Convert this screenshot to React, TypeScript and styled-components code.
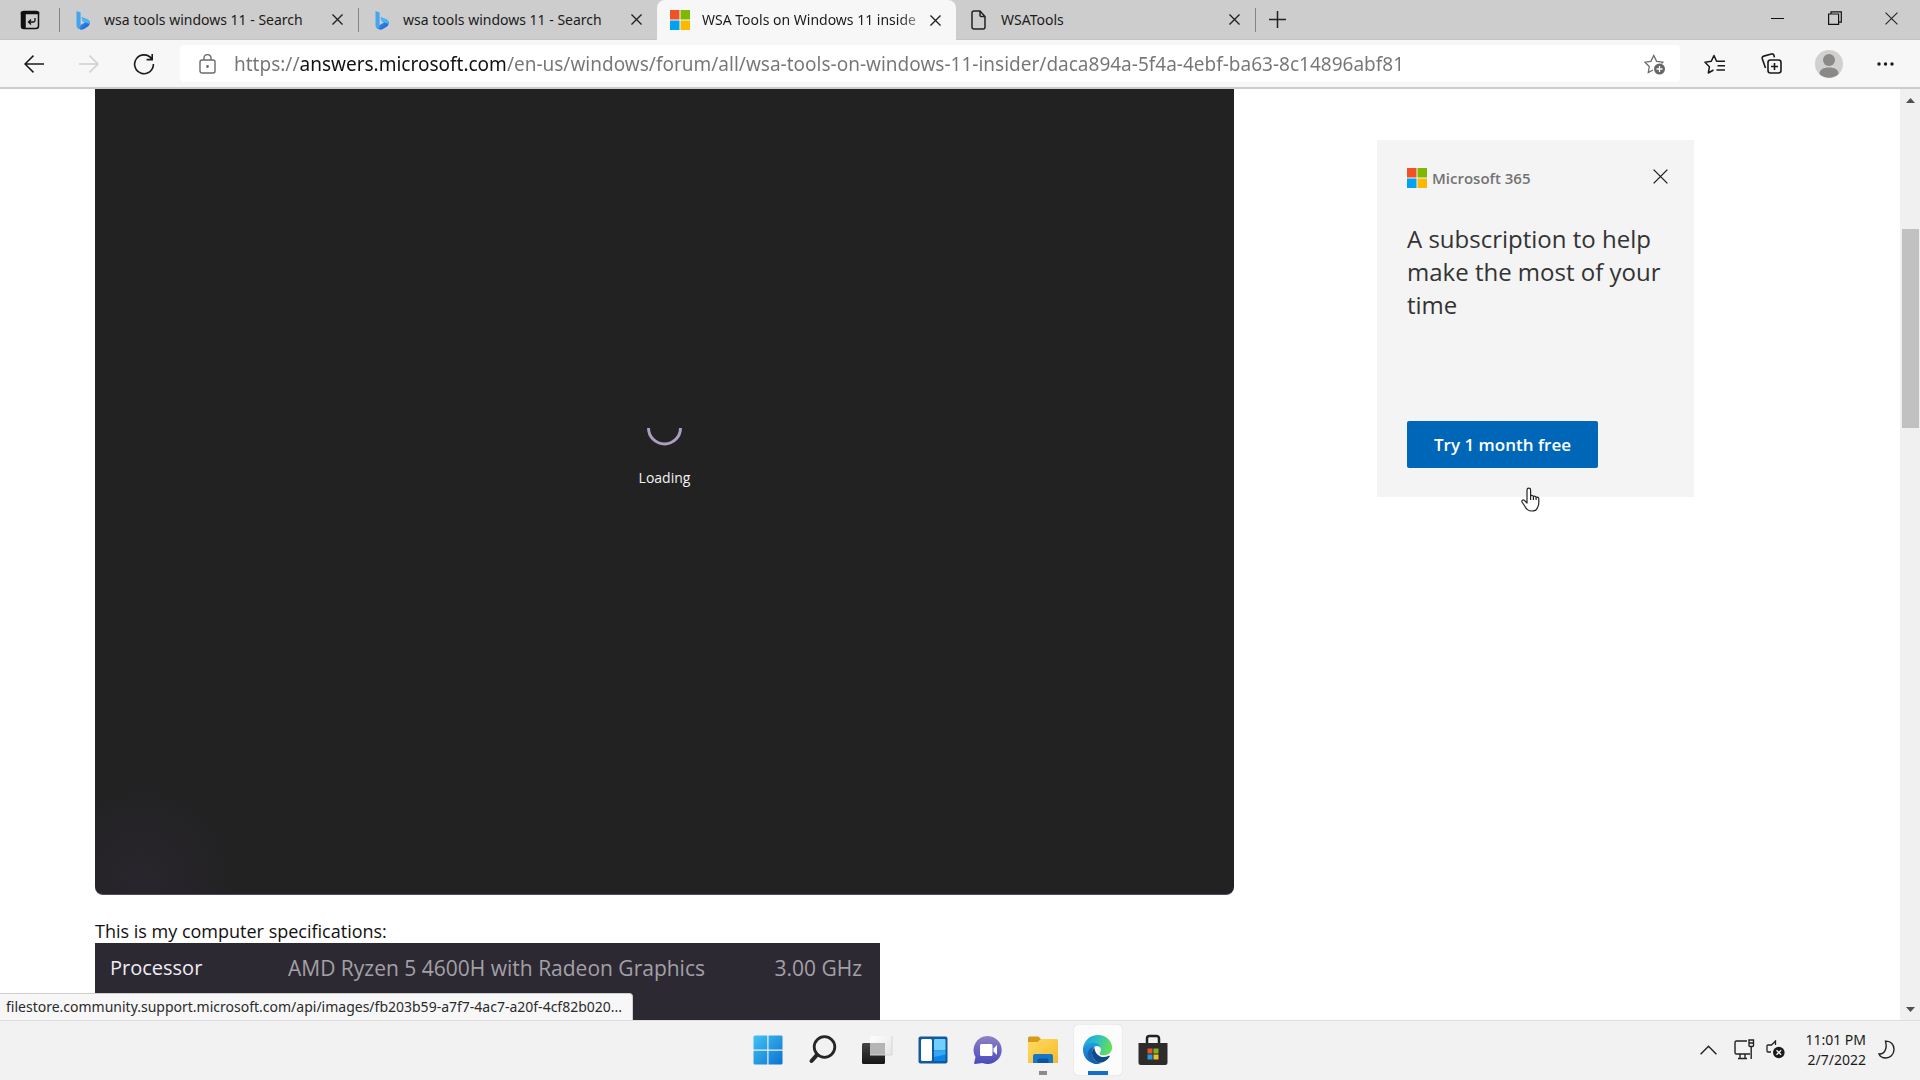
import React from 'react';
import styled, { createGlobalStyle, css } from 'styled-components';

const Global = createGlobalStyle`
  *, *::before, *::after { box-sizing: border-box; }
  html, body, #root { height: 100%; }
  body {
    margin: 0;
    overflow: hidden;
    background: #fff;
    color: #1b1b1b;
    font-family: "Noto Sans", "Open Sans", sans-serif;
    font-size: 14px;
  }
  h2, p { margin: 0; font-weight: 400; }
  svg { display: block; flex: none; }
`;

const Desktop = styled.div`
  display: flex;
  flex-direction: column;
  height: 100vh;
`;

const plainButton = css`
  display: flex;
  align-items: center;
  justify-content: center;
  flex: none;
  padding: 0;
  border: 0;
  background: none;
  color: inherit;
  font: inherit;
`;

/* ---------- tab strip ---------- */

const TabStrip = styled.header`
  display: flex;
  flex: none;
  height: 40px;
  background: #cdcdcd;
  border-bottom: 1px solid #c4c4c4;
`;

const TabActions = styled.button`
  ${plainButton}
  width: 59px;
`;

const TabList = styled.nav`
  display: flex;
  flex: 0 1 1196px;
  min-width: 0;
`;

const Tab = styled.div<{ $active?: boolean; $divider?: boolean }>`
  display: flex;
  align-items: center;
  flex: 1 1 0;
  min-width: 0;
  height: ${(p) => (p.$active ? 40 : 39)}px;
  padding: 0 14px 0 13px;
  border-radius: ${(p) => (p.$active ? '8px 8px 0 0' : 0)};
  background: ${(p) => (p.$active ? '#f7f7f7' : 'transparent')};
  background-image: ${(p) => (p.$divider ? 'linear-gradient(#858585, #858585)' : 'none')};
  background-size: 1px 24px;
  background-position: left center;
  background-repeat: no-repeat;
`;

const TabLink = styled.a<{ $fade?: boolean }>`
  flex: 1;
  min-width: 0;
  margin: 0 2px 0 12px;
  white-space: nowrap;
  color: #1b1b1b;
  line-height: 20px;
  text-decoration: none;
  ${(p) => p.$fade && 'mask-image: linear-gradient(to right, #000 88%, rgba(0, 0, 0, 0.2) 100%);'}
`;

const CloseTab = styled.button`
  ${plainButton}
  width: 14px;
  height: 24px;
`;

const NewTab = styled.button`
  ${plainButton}
  width: 44px;
  height: 39px;
  background: linear-gradient(#858585, #858585) left center / 1px 24px no-repeat;
`;

const WindowButtons = styled.div`
  display: flex;
  margin-left: auto;
`;

const WindowButton = styled.button`
  ${plainButton}
  width: 57px;
  height: 36px;
`;

/* ---------- toolbar ---------- */

const Toolbar = styled.div`
  display: flex;
  align-items: center;
  flex: none;
  height: 49px;
  padding: 0 6px;
  background: #f7f7f7;
  border-bottom: 2px solid #cccccc;
`;

const ToolButton = styled.button<{ $dim?: boolean; $wide?: boolean }>`
  ${plainButton}
  width: ${(p) => (p.$wide ? 57 : 55)}px;
  height: 36px;
  color: ${(p) => (p.$dim ? '#d0d0d0' : '#1b1b1b')};
`;

const Address = styled.form`
  display: flex;
  align-items: center;
  flex: 1;
  min-width: 0;
  height: 37px;
  margin: 0 6px 0 9px;
  padding: 0 16px 0 18px;
  gap: 18px;
  border-radius: 4px;
  background: #fff;
`;

const SiteInfo = styled.button`
  ${plainButton}
  width: 18px;
  height: 28px;
  color: #6b6b6b;
`;

const Url = styled.input`
  flex: 1;
  min-width: 0;
  height: 32px;
  padding: 0;
  border: 0;
  outline: 0;
  color: #767676;
  font: 19px "Noto Sans", "Open Sans", sans-serif;
  background: linear-gradient(to right, #767676 65px, #111 65px, #111 272px, #767676 272px);
  background-clip: text;
  -webkit-background-clip: text;
  -webkit-text-fill-color: transparent;
`;

/* ---------- page ---------- */

const Viewport = styled.div`
  display: flex;
  flex: 1;
  min-height: 0;
`;

const Page = styled.main`
  display: flex;
  align-items: flex-start;
  flex: 1;
  min-width: 0;
  overflow: hidden;
  padding-left: 95px;
  gap: 143px;
  font-family: "Open Sans", "Noto Sans", sans-serif;
`;

const Article = styled.article`
  flex: 0 1 1139px;
  min-width: 0;
  font-size: 18px;
  line-height: 24px;
  color: #111;
`;

const Player = styled.section`
  display: flex;
  flex-direction: column;
  align-items: center;
  justify-content: center;
  gap: 20px;
  aspect-ratio: 1139 / 806;
  margin-bottom: 24px;
  padding-bottom: 65px;
  border-bottom: 1px solid #54485c;
  border-radius: 0 0 8px 8px;
  background: radial-gradient(circle at 4% 98%, #29252c, #222223 7%);
  color: #f2f2f2;
  font-size: 14px;
`;

const Specs = styled.table`
  width: 785px;
  max-width: 100%;
  height: 100px;
  border-collapse: collapse;
  background: #2d2932;
  color: #a3a0a7;
  font-size: 21px;
  line-height: 28px;

  th, td {
    padding: 11px 0 0;
    font-weight: 400;
    text-align: left;
    vertical-align: top;
    white-space: nowrap;
  }
  th { width: 193px; padding-left: 15px; color: #efedf2; font-size: 20px; }
  td:last-child { padding-right: 18px; text-align: right; }
`;

const Promo = styled.aside`
  display: flex;
  flex-direction: column;
  align-items: flex-start;
  flex: 0 0 317px;
  height: 357px;
  margin-top: 51px;
  padding: 24px 27px 29px 30px;
  background: #f4f4f4;
`;

const PromoHeader = styled.div`
  display: flex;
  align-items: flex-start;
  justify-content: space-between;
  align-self: stretch;
  height: 28px;
  margin-bottom: 30px;
`;

const Brand = styled.span`
  display: flex;
  align-items: center;
  gap: 5px;
  height: 28px;
  color: #737373;
  font-size: 15px;
  font-weight: 600;
`;

const Dismiss = styled.button`
  ${plainButton}
  width: 14px;
  height: 24px;
`;

const PromoTitle = styled.h2`
  color: #333;
  font-size: 24px;
  line-height: 33px;
  white-space: nowrap;
`;

const Cta = styled.button`
  ${plainButton}
  width: 191px;
  height: 47px;
  margin-top: auto;
  border-radius: 2px;
  background: #0067b8;
  color: #fff;
  font-size: 17px;
  font-weight: 600;
`;

const Scrollbar = styled.div`
  display: flex;
  flex-direction: column;
  align-items: center;
  flex: 0 0 20px;
  background: #f0f0f0;
`;

const ScrollArrow = styled.button`
  ${plainButton}
  width: 20px;
  height: 22px;
`;

const ScrollSpace = styled.div<{ $share: number }>`
  flex: ${(p) => p.$share} 1 0;
`;

const ScrollThumb = styled.div`
  flex: 199 1 0;
  width: 17px;
  background: #c1c1c1;
`;

const LinkStatus = styled.div`
  position: fixed;
  left: 0;
  bottom: 60px;
  height: 27px;
  padding: 0 10px 0 6px;
  border-top: 1px solid #cfcfcf;
  border-right: 1px solid #cfcfcf;
  border-radius: 0 4px 0 0;
  background: #f7f7f7;
  color: #2b2b2b;
  line-height: 25px;
`;

const Pointer = styled.svg`
  position: fixed;
  left: 1521px;
  top: 487px;
`;

/* ---------- taskbar ---------- */

const Taskbar = styled.footer`
  display: grid;
  grid-template-columns: 1fr auto 1fr;
  align-items: center;
  flex: none;
  height: 60px;
  padding-bottom: 2px;
  border-top: 1px solid #dedede;
  background: #f2f2f2;
`;

const AppRow = styled.div`
  grid-column: 2;
  display: flex;
  gap: 7px;
`;

const AppButton = styled.button<{ $open?: boolean; $mark?: 'dot' | 'bar' }>`
  ${plainButton}
  width: 48px;
  height: 50px;
  border-radius: 4px;
  background: ${(p) => (p.$open ? '#fcfcfc' : 'transparent')};
  box-shadow: ${(p) => (p.$open ? '0 0 1px #bbb' : 'none')};
  ${(p) =>
    p.$mark &&
    css`
      background-image: linear-gradient(${p.$mark === 'bar' ? '#1470c8, #1470c8' : '#8b8b8b, #8b8b8b'});
      background-repeat: no-repeat;
      background-position: center bottom;
      background-size: ${p.$mark === 'bar' ? 20 : 8}px 4px;
    `}
`;

const Tray = styled.div`
  display: flex;
  align-items: center;
  justify-self: end;
  padding-right: 25px;
`;

const TrayButton = styled.button<{ $width: number }>`
  ${plainButton}
  width: ${(p) => p.$width}px;
  height: 40px;
`;

const Clock = styled.button`
  ${plainButton}
  display: block;
  margin: 0 12px 0 20px;
  font-size: 14px;
  line-height: 20px;
  text-align: right;
  span { display: block; }
`;

/* ---------- drawings ---------- */

const Cross = ({ size = 11, width = 1.5 }: { size?: number; width?: number }) => (
  <svg width={size} height={size} viewBox="0 0 12 12" stroke="#222" strokeWidth={width} fill="none">
    <path d="M.5.5l11 11M11.5.5l-11 11" />
  </svg>
);

const BingLogo = ({ id }: { id: string }) => (
  <svg width="20" height="20" viewBox="-4 0 20 20">
    <defs>
      <linearGradient id={id} x1="0" y1="0" x2="1" y2="1">
        <stop offset="0" stopColor="#3fa9f2" />
        <stop offset="1" stopColor="#1b57d0" />
      </linearGradient>
    </defs>
    <path d="M.5 1 4.600 2.400v12.600L7 16.500l-2 2.300C2.500 19.500.5 17.800.5 15.500z" fill="#43a5f0" />
    <path d="M4.600 15 9 12.600 7 11.500 5.500 7l6 2.600c3 1.400 3 5.200.4 7L8 19c-1.800 1-4.600 1-6-.5 1.500.3 2.600-.8 2.600-2z" fill={`url(#${id})`} />
    <path d="M5.500 7l6 2.600c1.800 1 2.300 2.600 2 4.300L7 11.500z" fill="#49b6f5" />
  </svg>
);

const MsLogo = ({ size = 20 }: { size?: number }) => (
  <svg width={size} height={size} viewBox="0 0 20 20">
    <path fill="#f05125" d="M0 0h9.500v9.500H0z" />
    <path fill="#7db900" d="M10.500 0H20v9.500h-9.500z" />
    <path fill="#02a3ee" d="M0 10.500h9.500V20H0z" />
    <path fill="#fdb801" d="M10.500 10.500H20V20h-9.500z" />
  </svg>
);

const PageIcon = () => (
  <svg width="20" height="20" viewBox="0 0 20 20" fill="none" stroke="#222" strokeWidth="1.500">
    <path d="M3 3a2 2 0 0 1 2-2h6l5 5.500V17a2 2 0 0 1-2 2H5a2 2 0 0 1-2-2zM11 1v4.500a1 1 0 0 0 1 1h4" />
  </svg>
);

const StartIcon = () => (
  <svg width="30" height="30" viewBox="0 0 30 30">
    <defs>
      <linearGradient id="start" x1="0" y1="0" x2="1" y2="1">
        <stop offset="0" stopColor="#43c3f5" />
        <stop offset="1" stopColor="#0a72d0" />
      </linearGradient>
    </defs>
    <path
      fill="url(#start)"
      d="M2 .5h12.300v14H.5V2A1.500 1.500 0 0 1 2 .5zM15.500.5H28A1.500 1.500 0 0 1 29.500 2v12.500h-14zM.5 15.700h13.800v13.800H2A1.500 1.500 0 0 1 .5 28zM15.500 15.700h14V28a1.500 1.500 0 0 1-1.500 1.500H15.500z"
    />
  </svg>
);

const SearchIcon = () => (
  <svg width="30" height="30" viewBox="0 0 30 30" fill="none" stroke="#262626" strokeLinecap="round">
    <circle cx="16.500" cy="12" r="10.300" strokeWidth="2.800" />
    <path d="M9 19.800 3.500 26" strokeWidth="4" />
  </svg>
);

const TaskViewIcon = () => (
  <svg width="32" height="30" viewBox="0 0 32 30">
    <defs>
      <linearGradient id="tv" x1="0" y1="0" x2="0" y2="1">
        <stop offset="0" stopColor="#444" />
        <stop offset="1" stopColor="#161616" />
      </linearGradient>
      <linearGradient id="tvf" x1="0" y1="0" x2="1" y2="1">
        <stop offset="0" stopColor="#fdfdfd" />
        <stop offset="1" stopColor="#e6e6e6" />
      </linearGradient>
    </defs>
    <rect x="0" y="8" width="23" height="21" rx="1.500" fill="url(#tv)" />
    <rect x="8" y="1" width="22" height="19" rx="1.500" fill="url(#tvf)" />
    <path d="M8 8h15v12H8z" fill="#b5b5b5" />
    <path d="M8 20h22V1" fill="none" stroke="#d6d6d6" />
  </svg>
);

const WidgetsIcon = () => (
  <svg width="30" height="30" viewBox="0 0 30 30">
    <rect x=".5" y="1.500" width="29" height="27" rx="2" fill="#115a9e" />
    <rect x="3" y="4" width="11" height="22" rx="1.500" fill="#fff" />
    <rect x="16" y="4" width="11.500" height="11.500" rx="1" fill="#6fd0fb" />
    <path d="M16 16.500h11.500V26H16z" fill="#0a84e6" />
    <path d="M16 15.500h11.500v4L16 22z" fill="#35a7f3" />
  </svg>
);

const ChatIcon = () => (
  <svg width="30" height="30" viewBox="0 0 30 30">
    <defs>
      <linearGradient id="chat" x1="0" y1="0" x2="0" y2="1">
        <stop offset="0" stopColor="#8e83c4" />
        <stop offset="1" stopColor="#4b49bd" />
      </linearGradient>
    </defs>
    <path d="M15 1a14 14 0 1 1-5.500 27L2 29c-.8 0-1-.5-.8-1.200L2.500 22A14 14 0 0 1 15 1z" fill="url(#chat)" />
    <rect x="7" y="9" width="12.500" height="12" rx="1.500" fill="#fff" />
    <path d="M20.500 13.500 24 10v10l-3.500-3.500z" fill="#fff" />
  </svg>
);

const FolderIcon = () => (
  <svg width="30" height="30" viewBox="0 0 30 30">
    <defs>
      <linearGradient id="fold" x1="0" y1="0" x2="1" y2="1">
        <stop offset="0" stopColor="#ffdc62" />
        <stop offset="1" stopColor="#f5b92c" />
      </linearGradient>
    </defs>
    <path d="M0 3a1.500 1.500 0 0 1 1.500-1.500h9L13 4v5H0z" fill="#d69a1c" />
    <path d="M0 7h9.500l3.500-3h15.500A1.500 1.500 0 0 1 30 5.500V28H0z" fill="url(#fold)" />
    <path d="M5 28v-7a2 2 0 0 1 2-2h16a2 2 0 0 1 2 2v7z" fill="#1677c8" />
    <path d="M9.500 28v-3a1.500 1.500 0 0 1 1.500-1.500h8a1.500 1.500 0 0 1 1.500 1.500v3z" fill="#0d549c" />
  </svg>
);

const EdgeIcon = () => (
  <svg width="31" height="31" viewBox="0 0 32 32">
    <defs>
      <linearGradient id="e1" x1="0" y1="0" x2="1" y2=".3">
        <stop offset="0" stopColor="#1f9de0" />
        <stop offset=".5" stopColor="#2bbfc8" />
        <stop offset="1" stopColor="#62dc5c" />
      </linearGradient>
      <linearGradient id="e2" x1="0" y1="0" x2="0" y2="1">
        <stop offset="0" stopColor="#1e9fe3" />
        <stop offset="1" stopColor="#1266b8" />
      </linearGradient>
    </defs>
    <path d="M1 15C2 6.500 8.500 1 16.500 1 25 1 31 7 31 14c0 5-3.800 8-8.300 8-2.700 0-4.500-.8-4.500-2 0-.8 1.300-1.500 1.300-4 0-3.500-3.500-6-8-6-5.500 0-9 2.500-10.500 5z" fill="url(#e1)" />
    <path d="M1 15c1.300-3.500 5-6 10.500-6 4.500 0 8 3 8 6.500 0-2-2.200-3-4-3-3.500 0-5 3.500-5 6.500C10.500 25.500 15 31 16 31 7.500 31 .5 24.500 1 15z" fill="url(#e2)" />
    <path d="M13 13.500c-2.500 2-3.500 5-2.800 8C11.500 27 16 30 21 29.200c-1.700 1-3.200 1.600-5 1.800C10 31 5.500 25.500 6 20c.3-3.500 3.500-6.500 7-6.500z" fill="#1763ad" />
    <path d="M12.800 14C9 17 9.500 24 14.500 28c4.500 3 10.500 1 14-4.600.4-.7-.2-1.200-.9-.9C21 26 13.500 22.500 12.800 14z" fill="#114a8b" />
  </svg>
);

const StoreIcon = () => (
  <svg width="30" height="32" viewBox="0 0 30 32">
    <path d="M9 10V4.500A2.500 2.500 0 0 1 11.500 2h7A2.500 2.500 0 0 1 21 4.500V10" fill="none" stroke="#222" strokeWidth="2.500" />
    <path d="M.5 9h29v19.500A2.500 2.500 0 0 1 27 31H3a2.500 2.500 0 0 1-2.500-2.500z" fill="#2e2b2b" />
    <path fill="#e8532b" d="M9.500 14.500h5v5h-5z" />
    <path fill="#7ab51d" d="M15.500 14.500h5v5h-5z" />
    <path fill="#1c9de0" d="M9.500 20.500h5v5h-5z" />
    <path fill="#f2bd2a" d="M15.500 20.500h5v5h-5z" />
  </svg>
);

const tabs = [
  { title: 'wsa tools windows 11 - Search', icon: <BingLogo id="b1" />, divider: true },
  { title: 'wsa tools windows 11 - Search', icon: <BingLogo id="b2" />, divider: true },
  { title: 'WSA Tools on Windows 11 inside', icon: <MsLogo />, active: true },
  { title: 'WSATools', icon: <PageIcon /> },
];

export default function App() {
  return (
    <Desktop>
      <Global />
      <TabStrip>
        <TabActions aria-label="Tab actions">
          <svg width="20" height="20" viewBox="0 0 20 20" fill="none" stroke="#111" strokeWidth="1.500">
            <rect x="1.500" y="1.500" width="17" height="17" rx="2.500" />
            <path d="M1.500 2.500h17v1h-17zM2 4.500h3v13H2z" fill="#111" />
            <path d="M15 8v2.500a1.500 1.500 0 0 1-1.500 1.500H9M11 9.500 8.500 12l2.500 2.500" strokeWidth="1.300" />
          </svg>
        </TabActions>
        <TabList aria-label="Open tabs">
          {tabs.map((t, i) => (
            <Tab key={i} $active={t.active} $divider={t.divider}>
              {t.icon}
              <TabLink href="#" $fade={t.active}>{t.title}</TabLink>
              <CloseTab aria-label="Close tab"><Cross /></CloseTab>
            </Tab>
          ))}
        </TabList>
        <NewTab aria-label="New tab">
          <svg width="17" height="17" viewBox="0 0 17 17" stroke="#222" strokeWidth="1.500"><path d="M8.500 0v17M0 8.500h17" /></svg>
        </NewTab>
        <WindowButtons>
          <WindowButton aria-label="Minimize">
            <svg width="13" height="13" viewBox="0 0 13 13" stroke="#111"><path d="M0 6.500h13" /></svg>
          </WindowButton>
          <WindowButton aria-label="Restore">
            <svg width="14" height="14" viewBox="0 0 14 14" fill="none" stroke="#111" strokeWidth="1.200"><path d="M.6 3h10v10.400H.6zM3 3V.8h10.300v10.400h-2.500" /></svg>
          </WindowButton>
          <WindowButton aria-label="Close window"><Cross size={13} width={1} /></WindowButton>
        </WindowButtons>
      </TabStrip>

      <Toolbar>
        <ToolButton aria-label="Back">
          <svg width="20" height="18" viewBox="0 0 20 18" fill="none" stroke="currentColor" strokeWidth="1.500"><path d="M20 9H1M9.500.6 1 9l8.500 8.400" /></svg>
        </ToolButton>
        <ToolButton aria-label="Forward" $dim disabled>
          <svg width="20" height="18" viewBox="0 0 20 18" fill="none" stroke="currentColor" strokeWidth="1.500"><path d="M0 9h19M10.500.6 19 9l-8.500 8.400" /></svg>
        </ToolButton>
        <ToolButton aria-label="Refresh">
          <svg width="22" height="22" viewBox="0 0 22 22" fill="none" stroke="currentColor" strokeWidth="1.600"><path d="M18.800 6A9.400 9.400 0 1 0 20.400 11M19.200 1v5.600h-5.600" /></svg>
        </ToolButton>
        <Address>
          <SiteInfo type="button" aria-label="View site information">
            <svg width="17" height="20" viewBox="0 0 17 20" fill="none" stroke="currentColor" strokeWidth="1.400">
              <rect x="1" y="6" width="15" height="13" rx="2" />
              <path d="M5 6V4a3.500 3.500 0 0 1 7 0v2" />
              <circle cx="8.500" cy="12.500" r=".7" fill="currentColor" />
            </svg>
          </SiteInfo>
          <Url
            aria-label="Address"
            defaultValue="https://answers.microsoft.com/en-us/windows/forum/all/wsa-tools-on-windows-11-insider/daca894a-5f4a-4ebf-ba63-8c14896abf81"
          />
          <SiteInfo type="button" aria-label="Add page to favorites">
            <svg width="22" height="22" viewBox="0 0 22 22" fill="none" stroke="currentColor" strokeWidth="1.300">
              <path d="M9 17 4.300 19.500l1-6L.9 9.200l6-.9L9.800 2.500l2.800 5.800 6.200.9-1.300 1.200" />
              <circle cx="15.500" cy="16" r="5.500" fill="#666" stroke="none" />
              <path d="M15.500 13v6M12.500 16h6" stroke="#fff" />
            </svg>
          </SiteInfo>
        </Address>
        <ToolButton $wide aria-label="Favorites">
          <svg width="22" height="20" viewBox="0 0 22 20" fill="none" stroke="currentColor" strokeWidth="1.500" strokeLinejoin="round">
            <path d="M9.500 16 4.300 19l1.100-6.200L1 8.200l6.200-.9L10 1.500l2.600 5.800H21M13.500 11.800H21M12.500 16H21" />
          </svg>
        </ToolButton>
        <ToolButton $wide aria-label="Collections">
          <svg width="21" height="21" viewBox="0 0 21 21" fill="none" stroke="currentColor" strokeWidth="1.600">
            <rect x="7" y="7" width="13" height="13" rx="2.500" />
            <path d="M13.500 10v7M10 13.500h7M4.500 15 1.200 5.500a2 2 0 0 1 1.500-2.400L10.500 1a2 2 0 0 1 2.500 1.500l.4 1.800" />
          </svg>
        </ToolButton>
        <ToolButton $wide aria-label="Profile">
          <svg width="28" height="28" viewBox="0 0 28 28">
            <circle cx="14" cy="14" r="14" fill="#d2d0ce" />
            <circle cx="14" cy="10" r="6" fill="#8b8988" />
            <path d="M4.500 24c0-4.500 4-6.500 9.500-6.500s9.500 2 9.500 6.500a14 14 0 0 1-19 0z" fill="#8b8988" />
          </svg>
        </ToolButton>
        <ToolButton $wide aria-label="Settings and more">
          <svg width="17" height="4" viewBox="0 0 17 4" fill="currentColor"><circle cx="2" cy="2" r="1.700" /><circle cx="8.500" cy="2" r="1.700" /><circle cx="15" cy="2" r="1.700" /></svg>
        </ToolButton>
      </Toolbar>

      <Viewport>
        <Page>
          <Article>
            <Player aria-label="Screenshot">
              <svg width="35" height="18" viewBox="0 0 35 18" fill="none" stroke="#ab9cc0" strokeWidth="3">
                <path d="M1.500 0a16 16 0 0 0 32 0" />
              </svg>
              <span>Loading</span>
            </Player>
            <p>This is my computer specifications:</p>
            <Specs>
              <tbody>
                <tr>
                  <th scope="row">Processor</th>
                  <td>AMD Ryzen 5 4600H with Radeon Graphics</td>
                  <td>3.00 GHz</td>
                </tr>
              </tbody>
            </Specs>
          </Article>
          <Promo>
            <PromoHeader>
              <Brand><MsLogo />Microsoft 365</Brand>
              <Dismiss aria-label="Dismiss"><Cross size={15} width={1.1} /></Dismiss>
            </PromoHeader>
            <PromoTitle>A subscription to help<br />make the most of your<br />time</PromoTitle>
            <Cta>Try 1 month free</Cta>
          </Promo>
        </Page>
        <Scrollbar>
          <ScrollArrow aria-label="Scroll up"><svg width="9" height="5" viewBox="0 0 9 5"><path d="M4.500 0 9 5H0z" fill="#505050" /></svg></ScrollArrow>
          <ScrollSpace $share={118} />
          <ScrollThumb />
          <ScrollSpace $share={570} />
          <ScrollArrow aria-label="Scroll down"><svg width="9" height="5" viewBox="0 0 9 5"><path d="M4.500 5 9 0H0z" fill="#505050" /></svg></ScrollArrow>
        </Scrollbar>
      </Viewport>

      <Taskbar>
        <AppRow>
          <AppButton aria-label="Start"><StartIcon /></AppButton>
          <AppButton aria-label="Search"><SearchIcon /></AppButton>
          <AppButton aria-label="Task view"><TaskViewIcon /></AppButton>
          <AppButton aria-label="Widgets"><WidgetsIcon /></AppButton>
          <AppButton aria-label="Chat"><ChatIcon /></AppButton>
          <AppButton aria-label="File Explorer" $mark="dot"><FolderIcon /></AppButton>
          <AppButton aria-label="Microsoft Edge" $open $mark="bar"><EdgeIcon /></AppButton>
          <AppButton aria-label="Microsoft Store"><StoreIcon /></AppButton>
        </AppRow>
        <Tray>
          <TrayButton $width={30} aria-label="Show hidden icons">
            <svg width="17" height="10" viewBox="0 0 17 10" fill="none" stroke="#222" strokeWidth="1.400"><path d="m.6 9.300 7.900-8 7.900 8" /></svg>
          </TrayButton>
          <TrayButton $width={42} aria-label="Network">
            <svg width="21" height="21" viewBox="0 0 21 21" fill="none" stroke="#222" strokeWidth="1.400">
              <path d="M13 2H2.500A1.500 1.500 0 0 0 1 3.500v10A1.500 1.500 0 0 0 2.500 15H16M6 15v4M11 15v4M4 19.500h9M15 1h4.500v5.500a1 1 0 0 1-1 1H16a1 1 0 0 1-1-1zM15 4h4.500M17.200 7.500V20" />
            </svg>
          </TrayButton>
          <TrayButton $width={20} aria-label="Volume muted">
            <svg width="19" height="19" viewBox="0 0 19 19" fill="none" stroke="#222" strokeWidth="1.300">
              <path d="M9.500 5V1L5.500 5H2a1 1 0 0 0-1 1v5a1 1 0 0 0 1 1h3" />
              <circle cx="12.800" cy="12.500" r="5.800" fill="#1b1b1b" stroke="none" />
              <path d="m10.500 10.200 4.600 4.600M15.100 10.200l-4.600 4.600" stroke="#fff" />
            </svg>
          </TrayButton>
          <Clock><span>11:01 PM</span><span>2/7/2022</span></Clock>
          <TrayButton $width={17} aria-label="Focus assist">
            <svg width="17" height="19" viewBox="0 0 17 19" fill="none" stroke="#222" strokeWidth="1.400">
              <path d="M7.500 1.200C13 .8 16.200 5 16 9.800 15.800 15 12 18 7.800 18 4.500 18 2 16.500 1 14c3.500.2 5.500-1.500 6.500-4.500 1-2.900.8-5.500 0-8.300z" />
            </svg>
          </TrayButton>
        </Tray>
      </Taskbar>

      <LinkStatus role="status">filestore.community.support.microsoft.com/api/images/fb203b59-a7f7-4ac7-a20f-4cf82b020...</LinkStatus>
      <Pointer width="19" height="25" viewBox="0 0 19 25" fill="#fff" stroke="#222" strokeWidth="1.200" strokeLinejoin="round">
        <path d="M6 14V3a1.800 1.800 0 0 1 3.600 0v6c.8-.9 2.500-.6 2.800.5 1-.6 2.400-.2 2.700.8 1.300-.5 2.700.2 2.700 1.500V16c0 3-1.300 4-1.800 5.500-.5 1.500-1.500 2.500-5.500 2.500-3.500 0-5-1.500-6.500-4.500L1 15c-.6-1.500.8-2.700 2.200-1.800L6 16zM9.600 9v4M12.400 9.500V13M15.100 10.500V13" />
      </Pointer>
    </Desktop>
  );
}
